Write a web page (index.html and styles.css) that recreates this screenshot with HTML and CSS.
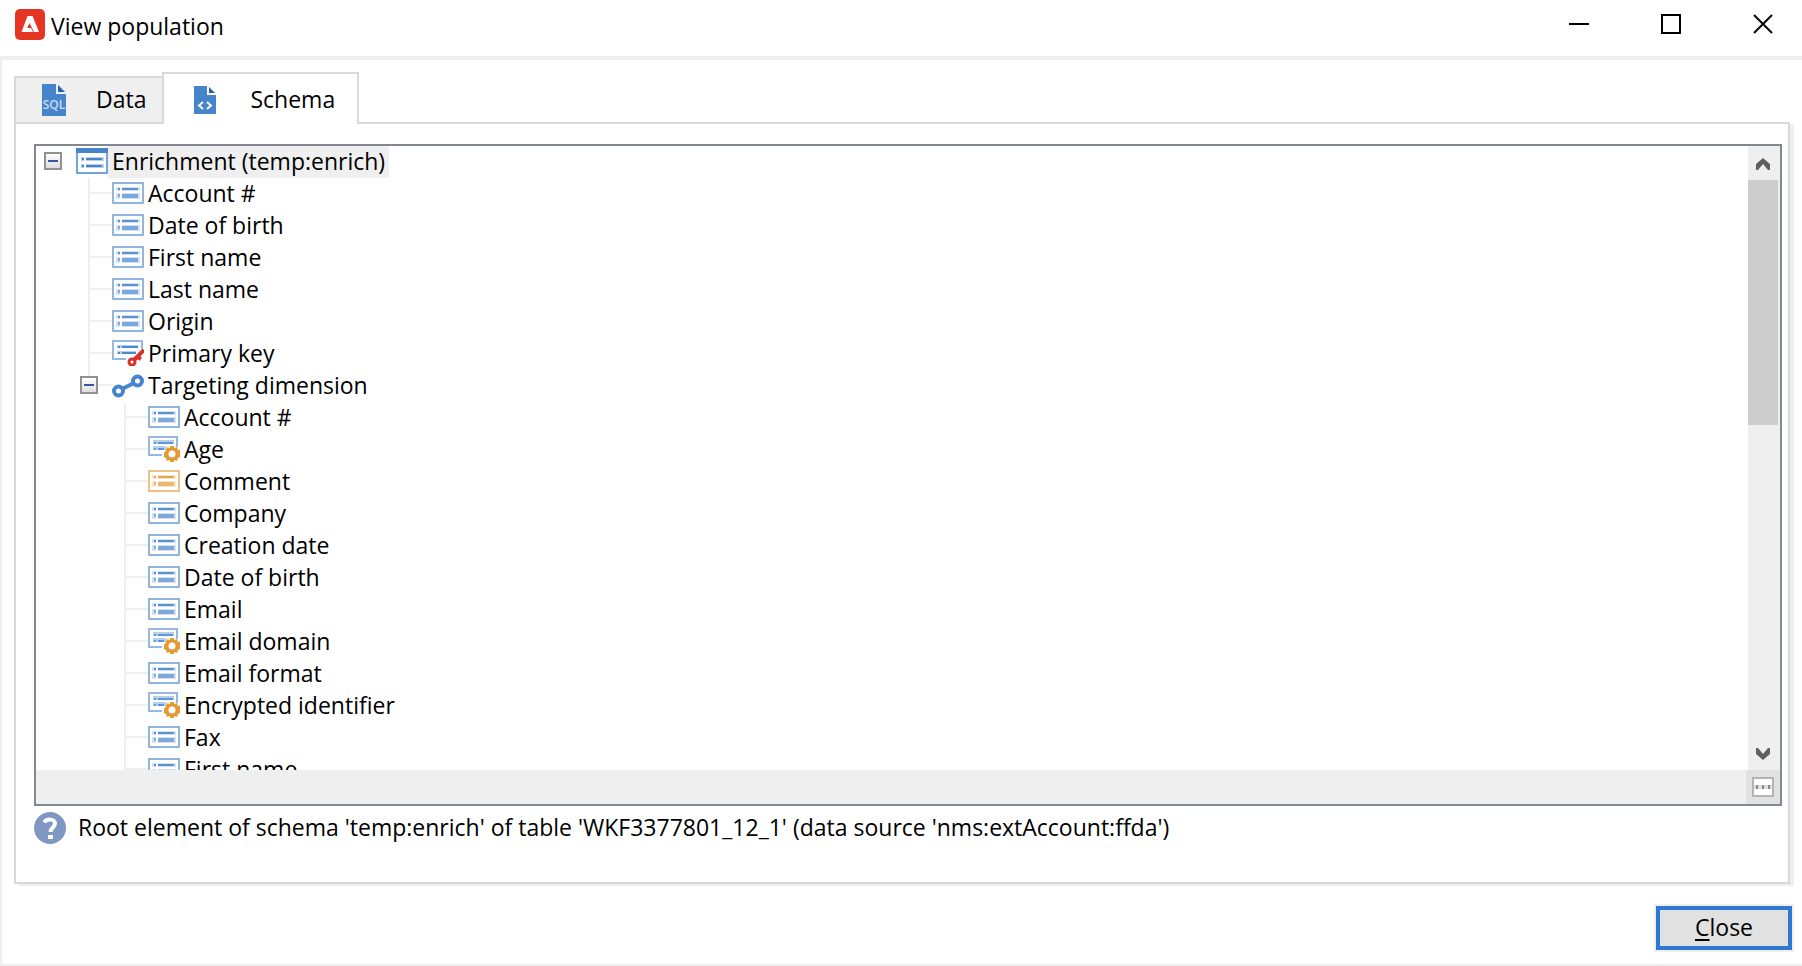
FILE: index.html
```html
<!DOCTYPE html>
<html lang="en">
<head>
<meta charset="utf-8">
<title>View population</title>
<link rel="stylesheet" href="styles.css">
</head>
<body>
<svg class="sprite" aria-hidden="true">
  <symbol id="field" viewBox="0 0 32 22">
    <path fill="#fff" stroke="currentColor" stroke-opacity=".6" stroke-width="2" d="M1 1h30v20H1z"/>
    <path fill="currentColor" fill-opacity=".25" d="M4 5h24v12H4z"/>
    <path fill="#fff" d="M8 5h2v12H8zM4 9h24v2H4z"/>
    <path fill="currentColor" fill-opacity=".85" d="M6 6h2v2H6zM10 6h16v2H10z"/>
    <path fill="currentColor" fill-opacity=".6" d="M6 12h2v3H6zM10 12h16v4H10z"/>
  </symbol>
  <symbol id="cut-field" viewBox="0 0 32 26">
    <path fill="none" stroke="#94b9e3" stroke-width="2" d="M14 19H1V1h28v10"/>
    <path fill="#b5cfec" d="M5 4h21v4H5zM5 10h13v4H5z"/>
    <path fill="#5c98d8" d="M6 6h2v2H6zM10 6h15v2H10zM6 12h2v2H6zM10 12h6v2H10z"/>
  </symbol>
  <symbol id="computed" viewBox="0 0 32 26">
    <use href="#cut-field"/>
    <path fill="#e39a35" d="M22 10h4v2l3-1 1 3h2v7l-2 1-1 3-3-1v2h-4v-2l-3 1-1-3-2-1v-4l2-3 1-3 3 1z"/>
    <circle cx="24" cy="18" r="3.500" fill="#fff"/>
  </symbol>
  <symbol id="key" viewBox="0 0 32 26">
    <path fill="none" stroke="#94b9e3" stroke-width="2" d="M14 19H1V1h29v8"/>
    <path fill="#b5cfec" d="M5 5h21v3H5zM5 11h19v3H5z"/>
    <path fill="#4a87cb" d="M6 6h2v2H6zM10 6h16v2H10zM6 12h2v2H6zM10 12h14v2H10z"/>
    <path fill="none" stroke="#fff" stroke-width="6" d="m21 21 10-10"/>
    <path fill="none" stroke="#d6322a" stroke-width="4" d="m21 21 11-11M25 17l4 2"/>
    <circle cx="20" cy="22" r="3" fill="#fff" stroke="#d6322a" stroke-width="3"/>
  </symbol>
  <symbol id="link" viewBox="0 0 32 26">
    <path fill="none" stroke="#4685cb" stroke-width="4" d="m10 17 12-6"/>
    <g fill="#fff" stroke="#4685cb" stroke-width="4"><circle cx="6.500" cy="19" r="4.500"/><circle cx="25.500" cy="9" r="4.500"/></g>
  </symbol>
</svg>

<div class="window">
  <header class="titlebar">
    <svg class="app-icon" viewBox="0 0 30 31" aria-hidden="true"><rect width="30" height="31" rx="5" fill="#e73525"/><path fill="#fff" fill-rule="evenodd" d="M12.500 7h5L24 23h-5l-4.500-9-2.300 5H16l2 4H6.500z"/></svg>
    <h1 class="title">View population</h1>
    <div class="window-buttons">
      <button class="window-button" aria-label="Minimize"><svg viewBox="0 0 20 20"><path d="M0 10h20"/></svg></button>
      <button class="window-button" aria-label="Maximize"><svg viewBox="0 0 20 20"><path d="M1 1h18v18H1z"/></svg></button>
      <button class="window-button" aria-label="Close window"><svg viewBox="0 0 20 20"><path d="m1 1 18 18M19 1 1 19"/></svg></button>
    </div>
  </header>

  <main class="content">
    <div class="tabs" role="tablist">
      <button class="tab" role="tab" aria-selected="false">
        <svg class="tab-icon" viewBox="0 0 24 32" aria-hidden="true"><path fill="#4685cb" d="M0 0h14v10h10v22H0z"/><path fill="#285fa8" d="M16 1v7h7z"/><text class="sql" x="12" y="25" text-anchor="middle">SQL</text></svg>
        <span class="tab-label">Data</span>
      </button>
      <button class="tab tab-active" role="tab" aria-selected="true">
        <svg class="tab-icon schema-icon" viewBox="0 0 22 28" aria-hidden="true"><path fill="#4685cb" d="M0 0h13v9h9v19H0z"/><path fill="#285fa8" d="M15 1v6h6z"/><path fill="none" stroke="#fff" stroke-width="2" d="m9 16-4 3.500L9 23M13 16l4 3.500-4 3.500"/></svg>
        <span class="tab-label">Schema</span>
      </button>
    </div>

    <section class="panel" role="tabpanel">
      <div class="tree-box">
        <div class="tree-main">
          <div class="tree">
            <div class="root-row">
              <button class="toggle" aria-label="Collapse Enrichment"></button>
              <svg class="root-icon" viewBox="0 0 32 26" aria-hidden="true"><path fill="#fff" stroke="#72a5dc" stroke-width="2" d="M1 4h30v21H1z"/><path fill="#4685cb" d="M0 0h32v5H0z"/><path fill="#b5cfec" d="M5 9h23v4H5zM5 16h23v4H5z"/><path fill="#fff" d="M8 8h2v13H8z"/><path fill="#4685cb" d="M6 10h2v2H6zM10 10h16v2H10zM6 17h2v2H6zM10 17h16v2H10z"/></svg>
              <span class="root-label">Enrichment (temp:enrich)</span>
            </div>
            <ul class="branch">
              <li><div class="row"><svg class="icon"><use href="#field"/></svg>Account #</div></li>
              <li><div class="row"><svg class="icon"><use href="#field"/></svg>Date of birth</div></li>
              <li><div class="row"><svg class="icon"><use href="#field"/></svg>First name</div></li>
              <li><div class="row"><svg class="icon"><use href="#field"/></svg>Last name</div></li>
              <li><div class="row"><svg class="icon"><use href="#field"/></svg>Origin</div></li>
              <li><div class="row"><svg class="icon icon-tall"><use href="#key"/></svg>Primary key</div></li>
              <li class="parent"><div class="row"><button class="toggle" aria-label="Collapse Targeting dimension"></button><svg class="icon icon-tall"><use href="#link"/></svg>Targeting dimension</div>
                <ul class="branch sub-branch">
                  <li><div class="row"><svg class="icon"><use href="#field"/></svg>Account #</div></li>
                  <li><div class="row"><svg class="icon icon-tall"><use href="#computed"/></svg>Age</div></li>
                  <li><div class="row"><svg class="icon icon-memo"><use href="#field"/></svg>Comment</div></li>
                  <li><div class="row"><svg class="icon"><use href="#field"/></svg>Company</div></li>
                  <li><div class="row"><svg class="icon"><use href="#field"/></svg>Creation date</div></li>
                  <li><div class="row"><svg class="icon"><use href="#field"/></svg>Date of birth</div></li>
                  <li><div class="row"><svg class="icon"><use href="#field"/></svg>Email</div></li>
                  <li><div class="row"><svg class="icon icon-tall"><use href="#computed"/></svg>Email domain</div></li>
                  <li><div class="row"><svg class="icon"><use href="#field"/></svg>Email format</div></li>
                  <li><div class="row"><svg class="icon icon-tall"><use href="#computed"/></svg>Encrypted identifier</div></li>
                  <li><div class="row"><svg class="icon"><use href="#field"/></svg>Fax</div></li>
                  <li><div class="row"><svg class="icon"><use href="#field"/></svg>First name</div></li>
                </ul>
              </li>
            </ul>
          </div>
          <div class="scrollbar">
            <button class="scroll-button" aria-label="Scroll up"><svg viewBox="0 0 14 12"><path d="M7 0l7 6v6h-2L7 6l-5 6H0V6z"/></svg></button>
            <div class="scroll-track"><div class="scroll-thumb"></div></div>
            <button class="scroll-button" aria-label="Scroll down"><svg viewBox="0 0 14 12"><path d="M7 12l7-6V0h-2L7 6 2 0H0v6z"/></svg></button>
          </div>
        </div>
        <div class="tree-footer">
          <button class="more" aria-label="More"><svg viewBox="0 0 22 20"><path fill="#fff" stroke="#b4b4b4" stroke-width="2" d="M1 1h20v18H1z"/><path fill="#ddd" d="M2 8h18v4H2z"/><path fill="#888" d="M4 8h2v4H4zM10 8h2v4h-2zM16 8h2v4h-2z"/></svg></button>
        </div>
      </div>
      <p class="hint">
        <svg class="help" viewBox="0 0 32 32" aria-hidden="true"><circle cx="16" cy="16" r="16" fill="#7f97c3"/><path fill="none" stroke="#fff" stroke-width="4" d="M10.500 10.500C12 6.500 21 6.500 21 11.500c0 4-4.500 4-4.500 8.500"/><path fill="#fff" d="M14 23h5v4h-5z"/></svg>
        <span class="hint-text">Root element of schema 'temp:enrich' of table 'WKF3377801_12_1' (data source 'nms:extAccount:ffda')</span>
      </p>
    </section>

    <footer class="actions">
      <button class="close"><u>C</u>lose</button>
    </footer>
  </main>
</div>
</body>
</html>
```
FILE: styles.css
```css
* { box-sizing: border-box; }

body {
  margin: 0;
  background: #fff;
  color: #000;
  font-family: "Open Sans", "Noto Sans", sans-serif;
  font-size: 23px;
  line-height: 30px;
}

button {
  margin: 0;
  padding: 0;
  border: 0;
  background: none;
  color: inherit;
  font: inherit;
}

svg { display: block; flex: none; }
.sprite { display: none; }

.window { display: flex; flex-direction: column; min-height: 100vh; }

.titlebar {
  display: flex;
  align-items: center;
  height: 56px;
  padding: 0 29px 8px 15px;
}
.app-icon { width: 30px; height: 31px; }
.title { margin: 0 0 0 6px; padding-top: 4px; font-size: 23px; font-weight: 400; }
.window-buttons { display: flex; gap: 72px; margin-left: auto; }
.window-button svg { width: 20px; height: 20px; fill: none; stroke: #000; stroke-width: 2; }

.content {
  display: flex;
  flex: 1;
  flex-direction: column;
  padding: 12px 10px 14px 12px;
  border: 2px solid #efefef;
  border-top-width: 4px;
  border-right: 0;
}

.tabs { display: flex; align-items: flex-end; }
.tab {
  display: flex;
  align-items: center;
  height: 46px;
  padding: 0 16px 0 26px;
  gap: 30px;
  border: 2px solid #d9d9d9;
  border-width: 2px 0 0 2px;
  background: #efefef;
}
.tab-active {
  z-index: 1;
  height: 52px;
  margin-bottom: -2px;
  padding: 2px 22px 0 30px;
  gap: 34px;
  border-right-width: 2px;
  background: #fff;
}
.tab-label { padding-bottom: 2px; }
.tab-icon { width: 24px; height: 32px; }
.schema-icon { width: 22px; height: 28px; }
.sql { fill: #c6daf1; font-size: 12px; font-weight: 600; }

.panel {
  display: flex;
  flex: 1;
  flex-direction: column;
  margin-right: 2px;
  padding: 20px 6px 38px 18px;
  border: 2px solid #d9d9d9;
  box-shadow: 4px 2px 0 #efefef;
}
.tree-box { display: flex; flex: 1; flex-direction: column; border: 2px solid #838791; }
.tree-main { display: flex; flex: 1 1 0; min-height: 0; overflow: hidden; }
.tree { flex: 1; overflow: hidden; }

.root-row { display: flex; align-items: center; height: 32px; padding-left: 8px; }
.root-row .toggle { margin-bottom: 2px; }
.root-icon { width: 32px; height: 26px; margin: 0 0 2px 14px; }
.root-label { padding: 0 4px 2px; background: #efefef; }

.branch { margin: 0 0 0 52px; padding: 0; list-style: none; }
.sub-branch { margin-left: 34px; }
.branch li {
  padding-left: 2px;
  background: linear-gradient(#efefef, #efefef) no-repeat 0 0 / 2px 100%;
}
.branch .parent { background-size: 2px 6px; }
.row { display: flex; align-items: center; height: 32px; padding-bottom: 2px; }
.row::before { width: 22px; height: 2px; background: #efefef; content: ""; }
.parent > .row::before { order: -1; width: 14px; }
.parent > .row .toggle { order: -2; margin-left: -10px; }
.icon { width: 32px; height: 22px; margin-right: 4px; color: #4685cb; }
.icon-tall { height: 26px; }
.icon-memo { color: #e39a35; }

.toggle {
  width: 18px;
  height: 18px;
  border: 2px solid #919191;
  background:
    linear-gradient(#3b55a5, #3b55a5) no-repeat center / 10px 2px,
    linear-gradient(#fff, #dedede);
}

.scrollbar { display: flex; flex-direction: column; width: 32px; padding-right: 2px; background: #efefef; }
.scroll-button { display: grid; place-items: center; height: 34px; padding-top: 2px; }
.scroll-button svg { width: 14px; height: 12px; fill: #606060; }
.scroll-track { flex: 1; }
.scroll-thumb { height: 44%; background: #cdcdcd; }

.tree-footer { display: flex; justify-content: flex-end; height: 34px; background: #efefef; }
.more { display: grid; place-items: center; width: 34px; background: #e1e1e1; }
.more svg { width: 22px; height: 20px; }

.hint { display: flex; align-items: center; gap: 12px; margin: 6px 0 0; }
.hint-text { padding-bottom: 2px; }
.help { width: 32px; height: 32px; }

.actions { display: flex; justify-content: flex-end; padding-top: 22px; }
.close {
  width: 136px;
  height: 44px;
  padding-bottom: 2px;
  border: 4px solid #2f78d0;
  outline: 2px solid #efefef;
  background: #e1e1e1;
}
.close u { text-underline-offset: 3px; }
```
